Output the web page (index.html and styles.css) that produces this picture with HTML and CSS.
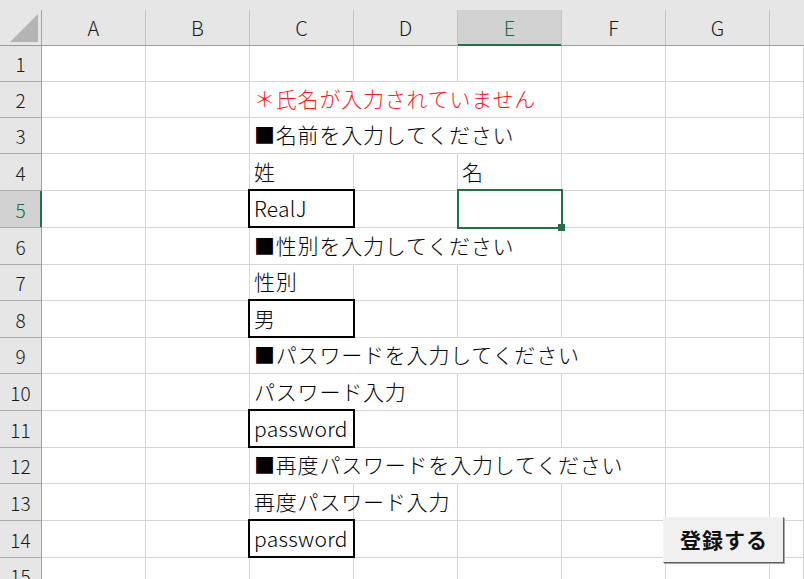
FILE: index.html
```html
<!DOCTYPE html>
<html lang="ja">
<head>
<meta charset="utf-8">
<title>Sheet</title>
<link rel="stylesheet" href="styles.css">
</head>
<body>
<div class="page">
  <div class="topstrip"></div>
  <div class="sheet">
    <div class="ch corner"><svg width="41" height="35" viewBox="0 0 41 35"><polygon points="10,32 38,32 38,4" fill="#b4b4b4"/></svg></div>
    <div class="ch">A</div><div class="ch">B</div><div class="ch">C</div><div class="ch">D</div>
    <div class="ch active">E</div><div class="ch">F</div><div class="ch">G</div><div class="ch last"></div>

    <div class="rh">1</div><div class="c"></div><div class="c"></div><div class="c"></div><div class="c"></div><div class="c"></div><div class="c"></div><div class="c"></div><div class="c"></div>

    <div class="rh">2</div><div class="c"></div><div class="c"></div><div class="c nr jp red">＊氏名が入力されていません</div><div class="c nr"></div><div class="c"></div><div class="c"></div><div class="c"></div><div class="c"></div>

    <div class="rh">3</div><div class="c"></div><div class="c"></div><div class="c nr jp">■名前を入力してください</div><div class="c nr"></div><div class="c"></div><div class="c"></div><div class="c"></div><div class="c"></div>

    <div class="rh">4</div><div class="c"></div><div class="c"></div><div class="c jp">姓</div><div class="c"></div><div class="c jp">名</div><div class="c"></div><div class="c"></div><div class="c"></div>

    <div class="rh active">5</div><div class="c"></div><div class="c"></div><div class="c box lat">RealJ</div><div class="c"></div><div class="c sel"></div><div class="c"></div><div class="c"></div><div class="c"></div>

    <div class="rh">6</div><div class="c"></div><div class="c"></div><div class="c nr jp">■性別を入力してください</div><div class="c nr"></div><div class="c"></div><div class="c"></div><div class="c"></div><div class="c"></div>

    <div class="rh">7</div><div class="c"></div><div class="c"></div><div class="c jp">性別</div><div class="c"></div><div class="c"></div><div class="c"></div><div class="c"></div><div class="c"></div>

    <div class="rh">8</div><div class="c"></div><div class="c"></div><div class="c box jp">男</div><div class="c"></div><div class="c"></div><div class="c"></div><div class="c"></div><div class="c"></div>

    <div class="rh">9</div><div class="c"></div><div class="c"></div><div class="c nr jp">■パスワードを入力してください</div><div class="c nr"></div><div class="c nr"></div><div class="c"></div><div class="c"></div><div class="c"></div>

    <div class="rh">10</div><div class="c"></div><div class="c"></div><div class="c nr jp">パスワード入力</div><div class="c"></div><div class="c"></div><div class="c"></div><div class="c"></div><div class="c"></div>

    <div class="rh">11</div><div class="c"></div><div class="c"></div><div class="c box lat">password</div><div class="c"></div><div class="c"></div><div class="c"></div><div class="c"></div><div class="c"></div>

    <div class="rh">12</div><div class="c"></div><div class="c"></div><div class="c nr jp">■再度パスワードを入力してください</div><div class="c nr"></div><div class="c nr"></div><div class="c"></div><div class="c"></div><div class="c"></div>

    <div class="rh">13</div><div class="c"></div><div class="c"></div><div class="c jp">再度パスワード入力</div><div class="c"></div><div class="c"></div><div class="c"></div><div class="c"></div><div class="c"></div>

    <div class="rh">14</div><div class="c"></div><div class="c"></div><div class="c box lat">password</div><div class="c"></div><div class="c"></div><div class="c"></div><div class="c"></div><div class="c"></div>

    <div class="rh">15</div><div class="c"></div><div class="c"></div><div class="c"></div><div class="c"></div><div class="c"></div><div class="c"></div><div class="c"></div><div class="c"></div>
  </div>
  <button class="btn" type="button">登録する</button>
</div>
</body>
</html>
```

FILE: styles.css
```css
html, body {
  margin: 0;
  padding: 0;
  background: #ffffff;
  overflow: hidden;
}

.page {
  position: relative;
  width: 804px;
  height: 579px;
  overflow: hidden;
  font-family: "Noto Sans CJK JP", "Noto Sans", sans-serif;
}

.topstrip {
  height: 10px;
  background: #e6e6e6;
}

.sheet {
  display: grid;
  grid-template-columns: 42px repeat(7, 104px) 1fr;
  grid-template-rows: 36px 36px 36px 36px 37px 37px 37px 36px 37px 36px 37px 37px 36px 37px 37px 36px;
}

.ch {
  box-sizing: border-box;
  background: #e6e6e6;
  border-right: 1px solid #c3c3c3;
  border-bottom: 1px solid #9b9b9b;
  display: flex;
  align-items: center;
  justify-content: center;
  font-size: 20px;
  font-weight: 300;
  color: #1a1a1a;
  padding-bottom: 1px;
}

.ch.corner {
  border-right-color: #a0a0a0;
  padding: 0;
  align-items: flex-start;
  justify-content: flex-start;
}

.ch.corner svg {
  display: block;
}

.ch.active {
  background: #d2d2d2;
  color: #1d6b40;
  box-shadow: inset 0 -1px 0 #217346;
  border-bottom-color: #217346;
}

.ch.last {
  border-right: none;
}

.rh {
  box-sizing: border-box;
  background: #e6e6e6;
  border-right: 1px solid #a0a0a0;
  border-bottom: 1px solid #acacac;
  display: flex;
  align-items: center;
  justify-content: center;
  font-size: 19px;
  font-weight: 300;
  color: #1a1a1a;
}

.rh.active {
  background: #d2d2d2;
  color: #1d6b40;
  border-right-color: #217346;
  box-shadow: inset -1px 0 0 #217346;
}

.c {
  box-sizing: border-box;
  border-right: 1px solid #d4d4d4;
  border-bottom: 1px solid #d4d4d4;
  display: flex;
  align-items: center;
  padding: 0 0 3px 4px;
  white-space: nowrap;
  color: #000000;
  min-width: 0;
}

.c.nr {
  border-right-color: transparent;
}

.jp {
  font-size: 21px;
  font-weight: 300;
  letter-spacing: 0.8px;
}

.lat {
  font-size: 21px;
  font-weight: 300;
  letter-spacing: 0.3px;
}

.red {
  color: #ff1a1a;
}

.box {
  position: relative;
}

.box::after {
  content: "";
  position: absolute;
  left: -2px;
  right: -2px;
  top: -2px;
  bottom: -1px;
  border: 2px solid #000000;
}

.sel {
  position: relative;
}

.sel::after {
  content: "";
  position: absolute;
  left: -1px;
  right: -2px;
  top: -2px;
  bottom: -2px;
  border: 2px solid #217346;
}

.sel::before {
  content: "";
  position: absolute;
  right: -4px;
  bottom: -4px;
  width: 7px;
  height: 7px;
  background: #217346;
  z-index: 1;
}

.btn {
  position: absolute;
  left: 663px;
  top: 517px;
  width: 121px;
  height: 46px;
  box-sizing: border-box;
  margin: 0;
  padding: 0 0 2px 1px;
  background: #f0f0f0;
  border: 1px solid;
  border-color: #f4f4f4 #5f5f5f #5f5f5f #f4f4f4;
  box-shadow: 1px 1px 0 #a8a8a8;
  font-family: "Noto Sans CJK JP", "Noto Sans", sans-serif;
  font-size: 21px;
  font-weight: bold;
  letter-spacing: 1px;
  color: #111111;
}
```
